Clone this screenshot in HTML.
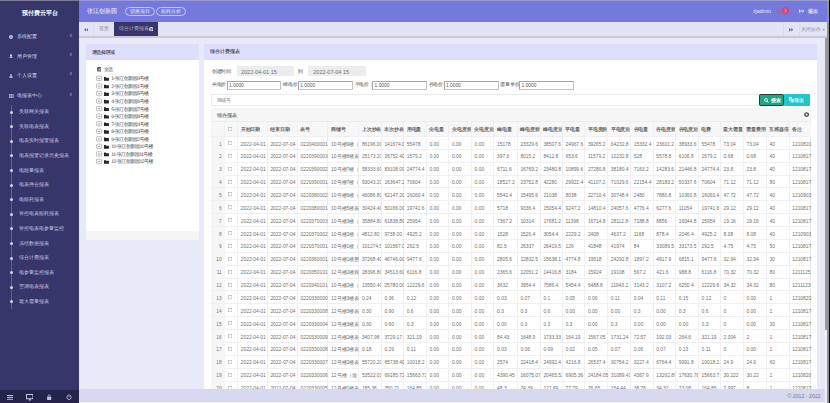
<!DOCTYPE html>
<html><head><meta charset="utf-8">
<style>
*{box-sizing:border-box;margin:0;padding:0}
html,body{width:830px;height:403px;overflow:hidden;background:#e9eaf8;font-family:"Liberation Sans",sans-serif;}
.abs{position:absolute}
div{position:absolute}
#sidebar{left:0;top:0;width:79px;height:403px;background:#36366b}
#sbb{left:0;top:389.6px;width:79px;height:13.4px;background:#23234b}
#topline{left:0;top:0;width:828.9px;height:1px;background:rgba(190,190,200,0.5)}
#hdr{left:79px;top:0;width:748.3px;height:21.9px;background:#7479db}
#tabs{left:79px;top:21.9px;width:748px;height:14.3px;background:#e3e4f3}
#tabsb{left:79px;top:36.2px;width:748px;height:1.4px;background:#c6c7dc}
#footer{left:79px;top:389.4px;width:745.5px;height:12.2px;background:#d8d8f1}
#footl{left:79px;top:401.6px;width:745.5px;height:1.4px;background:#f2f2fa}
#rs1{left:827.3px;top:0;width:1.6px;height:403px;background:#929292}
#rs2{left:828.9px;top:0;width:1.1px;height:403px;background:#0a0a0a}
#rs3{left:824.5px;top:37.7px;width:2.8px;height:292.6px;background:#9a9a9a}
#rs4{left:824.5px;top:330.3px;width:2.8px;height:72.7px;background:#f0f0f3}
.title{left:0;width:79px;top:9px;text-align:center;color:#fff;font-weight:bold;font-size:6px;line-height:8px}
.mi{left:17.2px;color:#d4d4ea;font-size:5.1px;line-height:8px;white-space:nowrap}
.mico{left:9px;width:3.5px;height:3.5px;background:#c9c9e3;border-radius:1px}
.chev{left:69.6px;color:#b4b4d4;font-size:8px;line-height:8px}
.smi{left:18.6px;color:#c8c8e2;font-size:5.25px;line-height:8px;white-space:nowrap}
.dot{left:9.85px;width:3px;height:3px;border-radius:50%;background:#d4d4ea}
#vline{left:10.7px;top:105px;width:1.2px;height:203.5px;background:#62629a}
.ico{color:#c2c2e0;font-size:6px;line-height:8px}

.hbrand{left:87px;top:7.2px;color:#fff;font-size:5.6px;line-height:8px;white-space:nowrap}
.pill{top:7px;height:9.4px;border:0.6px solid #c4c8f4;border-radius:5px;color:#e6e8ff;font-size:4.8px;line-height:8px;text-align:center;white-space:nowrap}
.hr{color:#e9ebff;font-size:5.2px;line-height:8px;white-space:nowrap}
.badge{left:782.1px;top:7.1px;width:6.8px;height:6.8px;border-radius:50%;background:#d3497a;color:#f4d8e2;font-size:4px;line-height:7.2px;text-align:center}
.bell{left:776.3px;top:7.6px;width:5px;height:6px}

.tab{color:#8e8ea8;font-size:4.8px;line-height:8px;white-space:nowrap}
#acttab{left:114.1px;top:21.9px;width:44.2px;height:14.1px;background:#36366b}
.sep{top:21.6px;width:0.6px;height:14.6px;background:#dadbec}

.panel{background:#fff;border-radius:1.2px}
.ph{background:#dee0fb}
.ptitle{color:#4a4a58;font-size:5.2px;line-height:8px;white-space:nowrap;-webkit-text-stroke:0.12px #4a4a58}

.tb{left:96.1px;width:4.6px;height:4.6px;border:0.6px solid #8a8a8a;background:#fff;border-radius:0.6px}
.tbm{left:97.3px;width:2.2px;height:0.6px;background:#666}
.fold{left:104px;width:5px;height:4px;background:#2b2b2b;border-radius:0.5px}
.tn{left:111.3px;color:#4a4a4a;font-size:5px;letter-spacing:-0.5px;line-height:8px;white-space:nowrap}

.lbl{color:#555;font-size:4.8px;letter-spacing:-0.2px;line-height:8px;white-space:nowrap}
.inp{height:9.1px;border:0.6px solid #c2c2c2;border-top-color:#a6a6a6;border-left-color:#a6a6a6;background:#fff;color:#555;font-size:4.85px;line-height:8.2px;padding-left:1.3px;white-space:nowrap}
.date{top:66.2px;height:10.3px;background:#ececec;color:#707070;font-size:5.5px;line-height:12.3px;white-space:nowrap}

.btn{top:94.1px;height:12px;border-radius:1px;color:#fff;font-size:5px;line-height:12px;white-space:nowrap;font-weight:bold}

.vl{top:121.7px;width:0.6px;height:281.3px;background:#f0f0f2}
.hl{left:211.4px;width:600.1px;height:0.6px;background:#f0f0f2}
.th{top:121.7px;height:14.8px;line-height:16.8px;padding-left:3.1px;font-size:4.5px;letter-spacing:-0.1px;font-weight:bold;color:#666;white-space:nowrap;overflow:hidden}
.td{height:12.87px;line-height:15.2px;padding-left:3.2px;font-size:4.9px;color:#707070;white-space:nowrap;overflow:hidden}
.idx{left:211.4px;width:13.4px;height:12.87px;line-height:15.2px;text-align:right;padding-right:3px;font-size:4.9px;color:#777;background:#f6f6f6}
.cbs{position:absolute;left:228px}
.cb{width:3.8px;height:3.8px;border:0.5px solid #9a9a9a;background:#fff}
</style></head><body>
<div id="sidebar"></div>
<div class="title">预付费云平台</div>
<div id="vline"></div>
<div class="mi" style="top:32.20px">系统配置</div>
<svg style="position:absolute;left:9px;top:35.00px" width="4.6" height="4" viewBox="0 0 4.6 4"><g fill="#d4d4ea"><circle cx="2" cy="2" r="1.45"/><rect x="1.55" y="0" width="0.9" height="4"/><rect x="0" y="1.55" width="4" height="0.9"/><rect x="1.55" y="0" width="0.9" height="4" transform="rotate(45 2 2)"/><rect x="1.55" y="0" width="0.9" height="4" transform="rotate(-45 2 2)"/></g><circle cx="2" cy="2" r="0.6" fill="#36366b"/></svg>
<div class="chev" style="top:31.70px">‹</div>
<div class="mi" style="top:51.50px">用户管理</div>
<svg style="position:absolute;left:9px;top:54.30px" width="4.6" height="4" viewBox="0 0 4.6 4"><g fill="#d4d4ea"><circle cx="2" cy="1.3" r="1.1"/><path d="M0.2 3.8 Q0.4 2.2 2 2.2 Q3.6 2.2 3.8 3.8 Z"/></g></svg>
<div class="chev" style="top:51.00px">‹</div>
<div class="mi" style="top:70.90px">个人设置</div>
<svg style="position:absolute;left:9px;top:73.70px" width="4.6" height="4" viewBox="0 0 4.6 4"><g fill="#d4d4ea"><circle cx="2" cy="1.1" r="0.95"/><path d="M0.3 3.8 L0.7 2.2 L3.3 2.2 L3.7 3.8 Z"/></g></svg>
<div class="chev" style="top:70.40px">‹</div>
<div class="mi" style="top:91.10px">电报表中心</div>
<svg style="position:absolute;left:9px;top:93.90px" width="4.6" height="4" viewBox="0 0 4.6 4"><g fill="#d4d4ea"><rect x="0" y="0.2" width="4.6" height="3.6"/></g><g fill="#36366b"><rect x="1.4" y="0.2" width="0.45" height="3.6"/><rect x="2.9" y="0.2" width="0.45" height="3.6"/><rect x="0" y="1.35" width="4.6" height="0.4"/><rect x="0" y="2.5" width="4.6" height="0.4"/></g></svg>
<div class="chev" style="top:90.60px">‹</div>
<div class="smi" style="top:107.20px">失联网关报表</div>
<div class="dot" style="top:110.50px"></div>
<div class="smi" style="top:121.80px">失联电表报表</div>
<div class="dot" style="top:125.10px"></div>
<div class="smi" style="top:136.40px">电表实时报警报表</div>
<div class="dot" style="top:139.70px"></div>
<div class="smi" style="top:151.00px">电表报警记录历史报表</div>
<div class="dot" style="top:154.30px"></div>
<div class="smi" style="top:165.60px">电能量报表</div>
<div class="dot" style="top:168.90px"></div>
<div class="smi" style="top:180.20px">电表停合报表</div>
<div class="dot" style="top:183.50px"></div>
<div class="smi" style="top:194.80px">电能耗报表</div>
<div class="dot" style="top:198.10px"></div>
<div class="smi" style="top:209.40px">管控电表能耗报表</div>
<div class="dot" style="top:212.70px"></div>
<div class="smi" style="top:224.00px">管控电表电参量监控</div>
<div class="dot" style="top:227.30px"></div>
<div class="smi" style="top:238.60px">冻结数据报表</div>
<div class="dot" style="top:241.90px"></div>
<div class="smi" style="top:253.20px">综合计费报表</div>
<div class="dot" style="top:256.50px"></div>
<div class="smi" style="top:267.80px">电参量监控报表</div>
<div class="dot" style="top:271.10px"></div>
<div class="smi" style="top:282.40px">空调电表报表</div>
<div class="dot" style="top:285.70px"></div>
<div class="smi" style="top:297.00px">最大需量报表</div>
<div class="dot" style="top:300.30px"></div>
<div id="sbb"></div>
<svg style="position:absolute;left:6.8px;top:394.8px" width="6" height="5.4" viewBox="0 0 6 5.4"><rect x="0" y="0" width="6" height="1.1" fill="#c2c2e0"/><rect x="0" y="2.1" width="6" height="1.1" fill="#c2c2e0"/><rect x="0" y="4.3" width="6" height="1.1" fill="#c2c2e0"/></svg>
<svg style="position:absolute;left:25.8px;top:394.2px" width="7.4" height="6.6" viewBox="0 0 7.4 6.6"><rect x="0.5" y="0.5" width="6.4" height="4.2" fill="none" stroke="#c2c2e0" stroke-width="1"/><rect x="2.7" y="5" width="2" height="1.6" fill="#c2c2e0"/></svg>
<svg style="position:absolute;left:47.2px;top:394.2px" width="4.4" height="6" viewBox="0 0 8.8 12"><path d="M2.2 6 V3.8 A2.2 2.2 0 0 1 6.6 3.8 V6" fill="none" stroke="#c2c2e0" stroke-width="1.5"/><rect x="0.2" y="5.4" width="8.4" height="6.4" rx="0.8" fill="#c2c2e0"/></svg>
<svg style="position:absolute;left:66.2px;top:394.2px" width="6" height="6" viewBox="0 0 12 12"><circle cx="6" cy="6.6" r="4.3" fill="none" stroke="#c2c2e0" stroke-width="1.7"/><rect x="4.2" y="0" width="3.6" height="5" fill="#23234b"/><rect x="5.1" y="0.4" width="1.8" height="5.6" fill="#c2c2e0"/></svg>
<div id="hdr"></div>
<div class="hbrand">张江创新园</div>
<div class="pill" style="left:125.3px;width:29.5px">切换项目</div>
<div class="pill" style="left:156px;width:29.6px">能耗分析</div>
<div class="hr" style="left:753px;top:6.8px">zjadmin</div>
<svg style="position:absolute;left:776px;top:7.6px" width="5.4" height="6" viewBox="0 0 5.4 6"><path d="M1.1 4.4 L1.1 2.6 Q1.1 0.7 2.7 0.7 Q4.3 0.7 4.3 2.6 L4.3 4.4 L4.9 4.9 L0.5 4.9 Z" fill="none" stroke="#d0507a" stroke-width="0.55"/><rect x="2.2" y="5.1" width="1" height="0.6" fill="#d0507a"/></svg>
<div class="badge">1</div>
<svg style="position:absolute;left:799px;top:9px" width="5" height="4" viewBox="0 0 5 4"><rect x="0" y="0.4" width="1.3" height="3.2" fill="#e4e6fb"/><path d="M1.6 2 L4.6 2 M3.4 0.6 L4.8 2 L3.4 3.4" stroke="#e4e6fb" stroke-width="0.9" fill="none"/></svg>
<div class="hr" style="left:807.8px;top:6.9px;font-weight:bold">退出</div>

<div id="tabs"></div>
<div id="tabsb"></div>
<svg style="position:absolute;left:84px;top:27.6px" width="4.4" height="3.6" viewBox="0 0 4.4 3.6"><path d="M0 1.8 L2.1 0 V3.6 Z M2.2 1.8 L4.3 0 V3.6 Z" fill="#6e6e80"/></svg>
<div class="sep" style="left:93.1px"></div>
<div class="tab" style="left:98.8px;top:25.2px;color:#858598;font-size:4.6px">首页</div>
<div id="acttab"></div>
<div class="tab" style="left:119.2px;top:25.2px;color:#b4b4d0;font-size:4.85px">综合计费报表</div>
<svg style="position:absolute;left:148.8px;top:26.9px" width="4.6" height="4.6" viewBox="0 0 10 10"><circle cx="5" cy="5" r="3.6" fill="none" stroke="#dcdcee" stroke-width="2.4"/><circle cx="5" cy="5" r="1.3" fill="#9a9ac0"/></svg>
<div class="sep" style="left:783.4px"></div>
<div class="sep" style="left:798.6px"></div>
<svg style="position:absolute;left:788.6px;top:28.1px" width="4.4" height="3.6" viewBox="0 0 4.4 3.6"><path d="M2.1 1.8 L0 0 V3.6 Z M4.3 1.8 L2.2 0 V3.6 Z" fill="#6e6e80"/></svg>
<div class="tab" style="left:801.3px;top:25.9px">关闭操作<span style="font-size:3.5px;position:relative;top:-0.3px;margin-left:0.6px">▼</span></div>


<!-- left panel -->
<div class="panel" style="left:86.3px;top:44.1px;width:112.6px;height:196px;background:#f5f5f5"></div>
<div class="panel" style="left:86.3px;top:60.1px;width:112.6px;height:171px"></div>
<div class="ph" style="left:86.3px;top:44.1px;width:112.6px;height:16px"></div>
<div class="ptitle" style="left:91.6px;top:47.6px;letter-spacing:-0.35px">请选择区域</div>
<svg style="position:absolute;left:96.6px;top:67.4px" width="4.6" height="4.6" viewBox="0 0 4.6 4.6"><rect x="0" y="0" width="4.6" height="4.6" rx="0.5" fill="#666"/><path d="M1.1 2.4 L2 3.3 L3.6 1.3" stroke="#fff" stroke-width="0.7" fill="none"/></svg>
<div class="tn" style="left:103.9px;top:65.7px;font-size:4.85px">全选</div>
<svg style="position:absolute;left:96px;top:60px" width="80" height="110" viewBox="0 0 80 110" font-size="5" letter-spacing="-0.5" fill="#4a4a4a" text-rendering="geometricPrecision"><path d="M3.05 20.60 V99.65" stroke="#d0d0d0" stroke-width="0.4" stroke-dasharray="0.6 0.6"/><rect x="0.55" y="16.25" width="5" height="4.3" rx="0.5" fill="#fff" stroke="#9a9a9a" stroke-width="0.6"/><path d="M1.8 18.60 H4.3" stroke="#777" stroke-width="0.7"/><path d="M5.6 18.60 H7.4" stroke="#c4c4c4" stroke-width="0.4"/><path d="M8 17.10 H9.6 L10.1 17.70 H12.9 V20.80 H8 Z" fill="#262626"/><text x="15.3" y="20.35">1-张江创新园9号楼</text><rect x="0.55" y="23.80" width="5" height="4.3" rx="0.5" fill="#fff" stroke="#9a9a9a" stroke-width="0.6"/><path d="M1.8 26.15 H4.3" stroke="#777" stroke-width="0.7"/><path d="M5.6 26.15 H7.4" stroke="#c4c4c4" stroke-width="0.4"/><path d="M8 24.65 H9.6 L10.1 25.25 H12.9 V28.35 H8 Z" fill="#262626"/><text x="15.3" y="27.90">2-张江创新园1号楼</text><rect x="0.55" y="31.35" width="5" height="4.3" rx="0.5" fill="#fff" stroke="#9a9a9a" stroke-width="0.6"/><path d="M1.8 33.70 H4.3" stroke="#777" stroke-width="0.7"/><path d="M5.6 33.70 H7.4" stroke="#c4c4c4" stroke-width="0.4"/><path d="M8 32.20 H9.6 L10.1 32.80 H12.9 V35.90 H8 Z" fill="#262626"/><text x="15.3" y="35.45">3-张江创新园5号楼</text><rect x="0.55" y="38.90" width="5" height="4.3" rx="0.5" fill="#fff" stroke="#9a9a9a" stroke-width="0.6"/><path d="M1.8 41.25 H4.3" stroke="#777" stroke-width="0.7"/><path d="M5.6 41.25 H7.4" stroke="#c4c4c4" stroke-width="0.4"/><path d="M8 39.75 H9.6 L10.1 40.35 H12.9 V43.45 H8 Z" fill="#262626"/><text x="15.3" y="43.00">4-张江创新园6号楼</text><rect x="0.55" y="46.45" width="5" height="4.3" rx="0.5" fill="#fff" stroke="#9a9a9a" stroke-width="0.6"/><path d="M1.8 48.80 H4.3" stroke="#777" stroke-width="0.7"/><path d="M5.6 48.80 H7.4" stroke="#c4c4c4" stroke-width="0.4"/><path d="M8 47.30 H9.6 L10.1 47.90 H12.9 V51.00 H8 Z" fill="#262626"/><text x="15.3" y="50.55">5-张江创新园7号楼</text><rect x="0.55" y="54.00" width="5" height="4.3" rx="0.5" fill="#fff" stroke="#9a9a9a" stroke-width="0.6"/><path d="M1.8 56.35 H4.3" stroke="#777" stroke-width="0.7"/><path d="M5.6 56.35 H7.4" stroke="#c4c4c4" stroke-width="0.4"/><path d="M8 54.85 H9.6 L10.1 55.45 H12.9 V58.55 H8 Z" fill="#262626"/><text x="15.3" y="58.10">6-张江创新园8号楼</text><rect x="0.55" y="61.55" width="5" height="4.3" rx="0.5" fill="#fff" stroke="#9a9a9a" stroke-width="0.6"/><path d="M1.8 63.90 H4.3" stroke="#777" stroke-width="0.7"/><path d="M5.6 63.90 H7.4" stroke="#c4c4c4" stroke-width="0.4"/><path d="M8 62.40 H9.6 L10.1 63.00 H12.9 V66.10 H8 Z" fill="#262626"/><text x="15.3" y="65.65">7-张江创新园4号楼</text><rect x="0.55" y="69.10" width="5" height="4.3" rx="0.5" fill="#fff" stroke="#9a9a9a" stroke-width="0.6"/><path d="M1.8 71.45 H4.3" stroke="#777" stroke-width="0.7"/><path d="M5.6 71.45 H7.4" stroke="#c4c4c4" stroke-width="0.4"/><path d="M8 69.95 H9.6 L10.1 70.55 H12.9 V73.65 H8 Z" fill="#262626"/><text x="15.3" y="73.20">8-张江创新园3号楼</text><rect x="0.55" y="76.65" width="5" height="4.3" rx="0.5" fill="#fff" stroke="#9a9a9a" stroke-width="0.6"/><path d="M1.8 79.00 H4.3" stroke="#777" stroke-width="0.7"/><path d="M5.6 79.00 H7.4" stroke="#c4c4c4" stroke-width="0.4"/><path d="M8 77.50 H9.6 L10.1 78.10 H12.9 V81.20 H8 Z" fill="#262626"/><text x="15.3" y="80.75">9-张江创新园2号楼</text><rect x="0.55" y="84.20" width="5" height="4.3" rx="0.5" fill="#fff" stroke="#9a9a9a" stroke-width="0.6"/><path d="M1.8 86.55 H4.3" stroke="#777" stroke-width="0.7"/><path d="M5.6 86.55 H7.4" stroke="#c4c4c4" stroke-width="0.4"/><path d="M8 85.05 H9.6 L10.1 85.65 H12.9 V88.75 H8 Z" fill="#262626"/><text x="15.3" y="88.30">10-张江创新园10号楼</text><rect x="0.55" y="91.75" width="5" height="4.3" rx="0.5" fill="#fff" stroke="#9a9a9a" stroke-width="0.6"/><path d="M1.8 94.10 H4.3" stroke="#777" stroke-width="0.7"/><path d="M5.6 94.10 H7.4" stroke="#c4c4c4" stroke-width="0.4"/><path d="M8 92.60 H9.6 L10.1 93.20 H12.9 V96.30 H8 Z" fill="#262626"/><text x="15.3" y="95.85">11-张江创新园11号楼</text><rect x="0.55" y="99.30" width="5" height="4.3" rx="0.5" fill="#fff" stroke="#9a9a9a" stroke-width="0.6"/><path d="M1.8 101.65 H4.3" stroke="#777" stroke-width="0.7"/><path d="M5.6 101.65 H7.4" stroke="#c4c4c4" stroke-width="0.4"/><path d="M8 100.15 H9.6 L10.1 100.75 H12.9 V103.85 H8 Z" fill="#262626"/><text x="15.3" y="103.40">12-张江创新园12号楼</text></svg>

<!-- right panel -->
<div class="panel" style="left:204.3px;top:44.1px;width:612.6px;height:360px"></div>
<div class="ph" style="left:204.3px;top:44.1px;width:612.6px;height:16.2px"></div>
<div class="ptitle" style="left:209.8px;top:47.4px">综合计费报表</div>

<div class="lbl" style="left:211.8px;top:67.8px">创建时间:</div>
<div class="date" style="left:236.6px;width:57.1px;padding-left:4.4px">2022-04-01 15</div>
<div class="date" style="left:293.7px;width:14.2px;background:#fff;text-align:center;color:#555;font-size:5.4px;line-height:11.2px">到</div>
<div class="date" style="left:307.9px;width:57.8px;padding-left:5.4px">2022-07-04 15</div>

<div class="lbl" style="left:211.8px;top:81px">尖电价:</div>
<div class="inp" style="left:226.7px;top:80.7px;width:54.8px">1.0000</div>
<div class="lbl" style="left:283.2px;top:81px">峰电价:</div>
<div class="inp" style="left:298px;top:80.7px;width:54.5px">1.0000</div>
<div class="lbl" style="left:354.6px;top:81px">平电价：</div>
<div class="inp" style="left:372.3px;top:80.7px;width:55px">1.0000</div>
<div class="lbl" style="left:428.6px;top:81px">谷电价:</div>
<div class="inp" style="left:443.7px;top:80.7px;width:54.9px">1.0000</div>
<div class="lbl" style="left:500.2px;top:81px">需量单价:</div>
<div class="inp" style="left:519.3px;top:80.7px;width:54.3px">1.0000</div>

<div style="left:211.2px;top:94.1px;width:548px;height:12.2px;border:0.6px solid #ebebeb;border-right:none;background:#fff"></div>
<div class="lbl" style="left:216.6px;top:96.2px;color:#8a8a8a;font-size:5.2px">商铺号</div>
<div class="btn" style="left:759.2px;width:25px;background:#1ea584;border:0.9px solid #2a3a36;border-radius:1.2px;padding-left:10.6px;line-height:10.4px">搜索</div><svg style="position:absolute;left:763.5px;top:97.6px" width="5" height="5" viewBox="0 0 5 5"><circle cx="2" cy="2" r="1.45" fill="none" stroke="#e8f6f2" stroke-width="0.9"/><path d="M3 3 L4.5 4.5" stroke="#e8f6f2" stroke-width="1"/></svg>
<div class="btn" style="left:784.2px;width:26px;background:#23c6c8;padding-left:9.8px;color:#e6f9f9">导出</div><svg style="position:absolute;left:788.7px;top:97.2px" width="5.2" height="5.6" viewBox="0 0 5.2 5.6"><rect x="0" y="0" width="3" height="3.8" fill="#eefafa"/><rect x="1.8" y="1.6" width="3.2" height="4" fill="#eefafa" stroke="#23c6c8" stroke-width="0.5"/></svg>

<!-- table panel -->
<div style="left:211.2px;top:108px;width:600.3px;height:300px;border:0.6px solid #e7e8ea;background:#fff"></div>
<div style="left:211.4px;top:108.4px;width:600px;height:13.3px;background:#f7f7f7;border-bottom:0.6px solid #ececee"></div>
<div class="ptitle" style="left:216.9px;top:112.4px;color:#5a5a5a;font-size:4.7px;-webkit-text-stroke:0.1px #777">综合报表</div>
<svg style="position:absolute;left:803.8px;top:112.4px" width="5.2" height="5.2" viewBox="0 0 10 10"><circle cx="5" cy="5" r="3.4" fill="none" stroke="#505050" stroke-width="2.6"/><circle cx="5" cy="5" r="1.2" fill="#d8d8d8"/></svg>
<div style="left:211.4px;top:121.7px;width:600px;height:14.8px;background:#f7f7f7"></div>
<div class="vl" style="left:224.30px"></div>
<div class="vl" style="left:237.10px"></div>
<div class="vl" style="left:266.70px"></div>
<div class="vl" style="left:296.80px"></div>
<div class="vl" style="left:327.40px"></div>
<div class="vl" style="left:358.20px"></div>
<div class="vl" style="left:380.70px"></div>
<div class="vl" style="left:403.10px"></div>
<div class="vl" style="left:425.70px"></div>
<div class="vl" style="left:448.30px"></div>
<div class="vl" style="left:470.90px"></div>
<div class="vl" style="left:493.40px"></div>
<div class="vl" style="left:516.70px"></div>
<div class="vl" style="left:539.70px"></div>
<div class="vl" style="left:561.80px"></div>
<div class="vl" style="left:584.20px"></div>
<div class="vl" style="left:607.10px"></div>
<div class="vl" style="left:630.00px"></div>
<div class="vl" style="left:652.60px"></div>
<div class="vl" style="left:675.00px"></div>
<div class="vl" style="left:697.90px"></div>
<div class="vl" style="left:719.90px"></div>
<div class="vl" style="left:742.80px"></div>
<div class="vl" style="left:765.80px"></div>
<div class="vl" style="left:788.50px"></div>
<svg class="cbs" style="top:127.20px" width="4.2" height="4.2" viewBox="0 0 4.2 4.2"><rect x="0.3" y="0.3" width="3.6" height="3.6" fill="#fff" stroke="#a8a8a8" stroke-width="0.55"/></svg>
<div class="th" style="left:237.60px;width:29.60px">开始日期</div>
<div class="th" style="left:267.20px;width:30.10px">结束日期</div>
<div class="th" style="left:297.30px;width:30.60px">表号</div>
<div class="th" style="left:327.90px;width:30.80px">商铺号</div>
<div class="th" style="left:358.70px;width:22.50px">上次抄表</div>
<div class="th" style="left:381.20px;width:22.40px">本次抄表</div>
<div class="th" style="left:403.60px;width:22.60px">用电量</div>
<div class="th" style="left:426.20px;width:22.60px">尖电量</div>
<div class="th" style="left:448.80px;width:22.60px">尖电度前</div>
<div class="th" style="left:471.40px;width:22.50px">尖电度后</div>
<div class="th" style="left:493.90px;width:23.30px">峰电量</div>
<div class="th" style="left:517.20px;width:23.00px">峰电度前</div>
<div class="th" style="left:540.20px;width:22.10px">峰电度后</div>
<div class="th" style="left:562.30px;width:22.40px">平电量</div>
<div class="th" style="left:584.70px;width:22.90px">平电度前</div>
<div class="th" style="left:607.60px;width:22.90px">平电度后</div>
<div class="th" style="left:630.50px;width:22.60px">谷电量</div>
<div class="th" style="left:653.10px;width:22.40px">谷电度前</div>
<div class="th" style="left:675.50px;width:22.90px">谷电度后</div>
<div class="th" style="left:698.40px;width:22.00px">电费</div>
<div class="th" style="left:720.40px;width:22.90px">最大需量</div>
<div class="th" style="left:743.30px;width:23.00px">需量费用</div>
<div class="th" style="left:766.30px;width:22.70px">互感器倍</div>
<div class="th" style="left:789.00px;width:22.50px">备注</div>
<div class="hl" style="top:136.00px"></div>
<div class="idx" style="top:136.50px">1</div>
<svg class="cbs" style="top:141.00px" width="4.2" height="4.2" viewBox="0 0 4.2 4.2"><rect x="0.3" y="0.3" width="3.6" height="3.6" fill="#fff" stroke="#a8a8a8" stroke-width="0.55"/></svg>
<div class="td" style="left:237.60px;top:136.50px;width:29.60px">2022-04-01</div>
<div class="td" style="left:267.20px;top:136.50px;width:30.10px">2022-07-04</div>
<div class="td" style="left:297.30px;top:136.50px;width:30.60px">0220400001</div>
<div class="td" style="left:327.90px;top:136.50px;width:30.80px">10号楼9楼（</div>
<div class="td" style="left:358.70px;top:136.50px;width:22.50px">86196.00</div>
<div class="td" style="left:381.20px;top:136.50px;width:22.40px">141674.00</div>
<div class="td" style="left:403.60px;top:136.50px;width:22.60px">55478</div>
<div class="td" style="left:426.20px;top:136.50px;width:22.60px">0.00</div>
<div class="td" style="left:448.80px;top:136.50px;width:22.60px">0.00</div>
<div class="td" style="left:471.40px;top:136.50px;width:22.50px">0.00</div>
<div class="td" style="left:493.90px;top:136.50px;width:23.30px">15178</div>
<div class="td" style="left:517.20px;top:136.50px;width:23.00px">23329.6</div>
<div class="td" style="left:540.20px;top:136.50px;width:22.10px">38507.6</div>
<div class="td" style="left:562.30px;top:136.50px;width:22.40px">24967.6</div>
<div class="td" style="left:584.70px;top:136.50px;width:22.90px">39265.2</div>
<div class="td" style="left:607.60px;top:136.50px;width:22.90px">64232.8</div>
<div class="td" style="left:630.50px;top:136.50px;width:22.60px">15332.4</div>
<div class="td" style="left:653.10px;top:136.50px;width:22.40px">23601.2</div>
<div class="td" style="left:675.50px;top:136.50px;width:22.90px">38933.6</div>
<div class="td" style="left:698.40px;top:136.50px;width:22.00px">55478</div>
<div class="td" style="left:720.40px;top:136.50px;width:22.90px">73.04</div>
<div class="td" style="left:743.30px;top:136.50px;width:23.00px">73.04</div>
<div class="td" style="left:766.30px;top:136.50px;width:22.70px">40</div>
<div class="td" style="left:789.00px;top:136.50px;width:22.50px">1210820</div>
<div class="hl" style="top:148.87px"></div>
<div class="idx" style="top:149.37px">2</div>
<svg class="cbs" style="top:153.87px" width="4.2" height="4.2" viewBox="0 0 4.2 4.2"><rect x="0.3" y="0.3" width="3.6" height="3.6" fill="#fff" stroke="#a8a8a8" stroke-width="0.55"/></svg>
<div class="td" style="left:237.60px;top:149.37px;width:29.60px">2022-04-01</div>
<div class="td" style="left:267.20px;top:149.37px;width:30.10px">2022-07-04</div>
<div class="td" style="left:297.30px;top:149.37px;width:30.60px">0220390003</div>
<div class="td" style="left:327.90px;top:149.37px;width:30.80px">10号楼8楼表</div>
<div class="td" style="left:358.70px;top:149.37px;width:22.50px">25173.20</div>
<div class="td" style="left:381.20px;top:149.37px;width:22.40px">26752.40</div>
<div class="td" style="left:403.60px;top:149.37px;width:22.60px">1579.2</div>
<div class="td" style="left:426.20px;top:149.37px;width:22.60px">0.00</div>
<div class="td" style="left:448.80px;top:149.37px;width:22.60px">0.00</div>
<div class="td" style="left:471.40px;top:149.37px;width:22.50px">0.00</div>
<div class="td" style="left:493.90px;top:149.37px;width:23.30px">397.6</div>
<div class="td" style="left:517.20px;top:149.37px;width:23.00px">8015.2</div>
<div class="td" style="left:540.20px;top:149.37px;width:22.10px">8412.8</div>
<div class="td" style="left:562.30px;top:149.37px;width:22.40px">653.6</div>
<div class="td" style="left:584.70px;top:149.37px;width:22.90px">11579.2</div>
<div class="td" style="left:607.60px;top:149.37px;width:22.90px">12232.8</div>
<div class="td" style="left:630.50px;top:149.37px;width:22.60px">528</div>
<div class="td" style="left:653.10px;top:149.37px;width:22.40px">5578.8</div>
<div class="td" style="left:675.50px;top:149.37px;width:22.90px">6106.8</div>
<div class="td" style="left:698.40px;top:149.37px;width:22.00px">1579.2</div>
<div class="td" style="left:720.40px;top:149.37px;width:22.90px">0.68</div>
<div class="td" style="left:743.30px;top:149.37px;width:23.00px">0.68</div>
<div class="td" style="left:766.30px;top:149.37px;width:22.70px">40</div>
<div class="td" style="left:789.00px;top:149.37px;width:22.50px">1210817-</div>
<div class="hl" style="top:161.74px"></div>
<div class="idx" style="top:162.24px">3</div>
<svg class="cbs" style="top:166.74px" width="4.2" height="4.2" viewBox="0 0 4.2 4.2"><rect x="0.3" y="0.3" width="3.6" height="3.6" fill="#fff" stroke="#a8a8a8" stroke-width="0.55"/></svg>
<div class="td" style="left:237.60px;top:162.24px;width:29.60px">2022-04-01</div>
<div class="td" style="left:267.20px;top:162.24px;width:30.10px">2022-07-04</div>
<div class="td" style="left:297.30px;top:162.24px;width:30.60px">0220390002</div>
<div class="td" style="left:327.90px;top:162.24px;width:30.80px">10号楼7楼（</div>
<div class="td" style="left:358.70px;top:162.24px;width:22.50px">58333.60</div>
<div class="td" style="left:381.20px;top:162.24px;width:22.40px">83108.00</div>
<div class="td" style="left:403.60px;top:162.24px;width:22.60px">24774.4</div>
<div class="td" style="left:426.20px;top:162.24px;width:22.60px">0.00</div>
<div class="td" style="left:448.80px;top:162.24px;width:22.60px">0.00</div>
<div class="td" style="left:471.40px;top:162.24px;width:22.50px">0.00</div>
<div class="td" style="left:493.90px;top:162.24px;width:23.30px">6711.6</div>
<div class="td" style="left:517.20px;top:162.24px;width:23.00px">16769.2</div>
<div class="td" style="left:540.20px;top:162.24px;width:22.10px">23480.8</div>
<div class="td" style="left:562.30px;top:162.24px;width:22.40px">10899.6</div>
<div class="td" style="left:584.70px;top:162.24px;width:22.90px">27280.8</div>
<div class="td" style="left:607.60px;top:162.24px;width:22.90px">38180.4</div>
<div class="td" style="left:630.50px;top:162.24px;width:22.60px">7163.2</div>
<div class="td" style="left:653.10px;top:162.24px;width:22.40px">14283.6</div>
<div class="td" style="left:675.50px;top:162.24px;width:22.90px">21446.8</div>
<div class="td" style="left:698.40px;top:162.24px;width:22.00px">24774.4</div>
<div class="td" style="left:720.40px;top:162.24px;width:22.90px">23.8</div>
<div class="td" style="left:743.30px;top:162.24px;width:23.00px">23.8</div>
<div class="td" style="left:766.30px;top:162.24px;width:22.70px">40</div>
<div class="td" style="left:789.00px;top:162.24px;width:22.50px">1210817-</div>
<div class="hl" style="top:174.61px"></div>
<div class="idx" style="top:175.11px">4</div>
<svg class="cbs" style="top:179.61px" width="4.2" height="4.2" viewBox="0 0 4.2 4.2"><rect x="0.3" y="0.3" width="3.6" height="3.6" fill="#fff" stroke="#a8a8a8" stroke-width="0.55"/></svg>
<div class="td" style="left:237.60px;top:175.11px;width:29.60px">2022-04-01</div>
<div class="td" style="left:267.20px;top:175.11px;width:30.10px">2022-07-04</div>
<div class="td" style="left:297.30px;top:175.11px;width:30.60px">0220390001</div>
<div class="td" style="left:327.90px;top:175.11px;width:30.80px">10号楼7楼（</div>
<div class="td" style="left:358.70px;top:175.11px;width:22.50px">93043.20</div>
<div class="td" style="left:381.20px;top:175.11px;width:22.40px">163647.2</div>
<div class="td" style="left:403.60px;top:175.11px;width:22.60px">70604</div>
<div class="td" style="left:426.20px;top:175.11px;width:22.60px">0.00</div>
<div class="td" style="left:448.80px;top:175.11px;width:22.60px">0.00</div>
<div class="td" style="left:471.40px;top:175.11px;width:22.50px">0.00</div>
<div class="td" style="left:493.90px;top:175.11px;width:23.30px">18527.2</div>
<div class="td" style="left:517.20px;top:175.11px;width:23.00px">23752.8</div>
<div class="td" style="left:540.20px;top:175.11px;width:22.10px">42280</div>
<div class="td" style="left:562.30px;top:175.11px;width:22.40px">29922.4</div>
<div class="td" style="left:584.70px;top:175.11px;width:22.90px">41107.2</div>
<div class="td" style="left:607.60px;top:175.11px;width:22.90px">71029.6</div>
<div class="td" style="left:630.50px;top:175.11px;width:22.60px">22154.4</div>
<div class="td" style="left:653.10px;top:175.11px;width:22.40px">28183.2</div>
<div class="td" style="left:675.50px;top:175.11px;width:22.90px">50337.6</div>
<div class="td" style="left:698.40px;top:175.11px;width:22.00px">70604</div>
<div class="td" style="left:720.40px;top:175.11px;width:22.90px">71.12</div>
<div class="td" style="left:743.30px;top:175.11px;width:23.00px">71.12</div>
<div class="td" style="left:766.30px;top:175.11px;width:22.70px">80</div>
<div class="td" style="left:789.00px;top:175.11px;width:22.50px">1210817-</div>
<div class="hl" style="top:187.48px"></div>
<div class="idx" style="top:187.98px">5</div>
<svg class="cbs" style="top:192.48px" width="4.2" height="4.2" viewBox="0 0 4.2 4.2"><rect x="0.3" y="0.3" width="3.6" height="3.6" fill="#fff" stroke="#a8a8a8" stroke-width="0.55"/></svg>
<div class="td" style="left:237.60px;top:187.98px;width:29.60px">2022-04-01</div>
<div class="td" style="left:267.20px;top:187.98px;width:30.10px">2022-07-04</div>
<div class="td" style="left:297.30px;top:187.98px;width:30.60px">0220380002</div>
<div class="td" style="left:327.90px;top:187.98px;width:30.80px">10号楼6楼（</div>
<div class="td" style="left:358.70px;top:187.98px;width:22.50px">46086.80</div>
<div class="td" style="left:381.20px;top:187.98px;width:22.40px">62147.20</div>
<div class="td" style="left:403.60px;top:187.98px;width:22.60px">16060.4</div>
<div class="td" style="left:426.20px;top:187.98px;width:22.60px">0.00</div>
<div class="td" style="left:448.80px;top:187.98px;width:22.60px">0.00</div>
<div class="td" style="left:471.40px;top:187.98px;width:22.50px">0.00</div>
<div class="td" style="left:493.90px;top:187.98px;width:23.30px">5542.4</div>
<div class="td" style="left:517.20px;top:187.98px;width:23.00px">15495.6</div>
<div class="td" style="left:540.20px;top:187.98px;width:22.10px">21038</div>
<div class="td" style="left:562.30px;top:187.98px;width:22.40px">8038</div>
<div class="td" style="left:584.70px;top:187.98px;width:22.90px">22710.4</div>
<div class="td" style="left:607.60px;top:187.98px;width:22.90px">30748.4</div>
<div class="td" style="left:630.50px;top:187.98px;width:22.60px">2480</div>
<div class="td" style="left:653.10px;top:187.98px;width:22.40px">7880.8</div>
<div class="td" style="left:675.50px;top:187.98px;width:22.90px">10360.8</div>
<div class="td" style="left:698.40px;top:187.98px;width:22.00px">16060.4</div>
<div class="td" style="left:720.40px;top:187.98px;width:22.90px">47.72</div>
<div class="td" style="left:743.30px;top:187.98px;width:23.00px">47.72</div>
<div class="td" style="left:766.30px;top:187.98px;width:22.70px">40</div>
<div class="td" style="left:789.00px;top:187.98px;width:22.50px">1210903</div>
<div class="hl" style="top:200.35px"></div>
<div class="idx" style="top:200.85px">6</div>
<svg class="cbs" style="top:205.35px" width="4.2" height="4.2" viewBox="0 0 4.2 4.2"><rect x="0.3" y="0.3" width="3.6" height="3.6" fill="#fff" stroke="#a8a8a8" stroke-width="0.55"/></svg>
<div class="td" style="left:237.60px;top:200.85px;width:29.60px">2022-04-01</div>
<div class="td" style="left:267.20px;top:200.85px;width:30.10px">2022-07-04</div>
<div class="td" style="left:297.30px;top:200.85px;width:30.60px">0220380001</div>
<div class="td" style="left:327.90px;top:200.85px;width:30.80px">10号楼5楼表</div>
<div class="td" style="left:358.70px;top:200.85px;width:22.50px">30424.40</div>
<div class="td" style="left:381.20px;top:200.85px;width:22.40px">50166.00</div>
<div class="td" style="left:403.60px;top:200.85px;width:22.60px">19741.6</div>
<div class="td" style="left:426.20px;top:200.85px;width:22.60px">0.00</div>
<div class="td" style="left:448.80px;top:200.85px;width:22.60px">0.00</div>
<div class="td" style="left:471.40px;top:200.85px;width:22.50px">0.00</div>
<div class="td" style="left:493.90px;top:200.85px;width:23.30px">5718</div>
<div class="td" style="left:517.20px;top:200.85px;width:23.00px">9336.4</div>
<div class="td" style="left:540.20px;top:200.85px;width:22.10px">15054.4</div>
<div class="td" style="left:562.30px;top:200.85px;width:22.40px">9247.2</div>
<div class="td" style="left:584.70px;top:200.85px;width:22.90px">14810.4</div>
<div class="td" style="left:607.60px;top:200.85px;width:22.90px">24057.6</div>
<div class="td" style="left:630.50px;top:200.85px;width:22.60px">4776.4</div>
<div class="td" style="left:653.10px;top:200.85px;width:22.40px">6277.6</div>
<div class="td" style="left:675.50px;top:200.85px;width:22.90px">11054</div>
<div class="td" style="left:698.40px;top:200.85px;width:22.00px">19741.6</div>
<div class="td" style="left:720.40px;top:200.85px;width:22.90px">29.12</div>
<div class="td" style="left:743.30px;top:200.85px;width:23.00px">29.12</div>
<div class="td" style="left:766.30px;top:200.85px;width:22.70px">40</div>
<div class="td" style="left:789.00px;top:200.85px;width:22.50px">1210817-</div>
<div class="hl" style="top:213.22px"></div>
<div class="idx" style="top:213.72px">7</div>
<svg class="cbs" style="top:218.22px" width="4.2" height="4.2" viewBox="0 0 4.2 4.2"><rect x="0.3" y="0.3" width="3.6" height="3.6" fill="#fff" stroke="#a8a8a8" stroke-width="0.55"/></svg>
<div class="td" style="left:237.60px;top:213.72px;width:29.60px">2022-04-01</div>
<div class="td" style="left:267.20px;top:213.72px;width:30.10px">2022-07-04</div>
<div class="td" style="left:297.30px;top:213.72px;width:30.60px">0220370003</div>
<div class="td" style="left:327.90px;top:213.72px;width:30.80px">10号楼3楼（</div>
<div class="td" style="left:358.70px;top:213.72px;width:22.50px">35884.80</div>
<div class="td" style="left:381.20px;top:213.72px;width:22.40px">61838.80</div>
<div class="td" style="left:403.60px;top:213.72px;width:22.60px">25954</div>
<div class="td" style="left:426.20px;top:213.72px;width:22.60px">0.00</div>
<div class="td" style="left:448.80px;top:213.72px;width:22.60px">0.00</div>
<div class="td" style="left:471.40px;top:213.72px;width:22.50px">0.00</div>
<div class="td" style="left:493.90px;top:213.72px;width:23.30px">7367.2</div>
<div class="td" style="left:517.20px;top:213.72px;width:23.00px">10314</div>
<div class="td" style="left:540.20px;top:213.72px;width:22.10px">17681.2</div>
<div class="td" style="left:562.30px;top:213.72px;width:22.40px">11398</div>
<div class="td" style="left:584.70px;top:213.72px;width:22.90px">16714.8</div>
<div class="td" style="left:607.60px;top:213.72px;width:22.90px">28112.8</div>
<div class="td" style="left:630.50px;top:213.72px;width:22.60px">7188.8</div>
<div class="td" style="left:653.10px;top:213.72px;width:22.40px">8856</div>
<div class="td" style="left:675.50px;top:213.72px;width:22.90px">16044.8</div>
<div class="td" style="left:698.40px;top:213.72px;width:22.00px">25954</div>
<div class="td" style="left:720.40px;top:213.72px;width:22.90px">19.16</div>
<div class="td" style="left:743.30px;top:213.72px;width:23.00px">19.16</div>
<div class="td" style="left:766.30px;top:213.72px;width:22.70px">40</div>
<div class="td" style="left:789.00px;top:213.72px;width:22.50px">1210817-</div>
<div class="hl" style="top:226.09px"></div>
<div class="idx" style="top:226.59px">8</div>
<svg class="cbs" style="top:231.09px" width="4.2" height="4.2" viewBox="0 0 4.2 4.2"><rect x="0.3" y="0.3" width="3.6" height="3.6" fill="#fff" stroke="#a8a8a8" stroke-width="0.55"/></svg>
<div class="td" style="left:237.60px;top:226.59px;width:29.60px">2022-04-01</div>
<div class="td" style="left:267.20px;top:226.59px;width:30.10px">2022-07-04</div>
<div class="td" style="left:297.30px;top:226.59px;width:30.60px">0220370002</div>
<div class="td" style="left:327.90px;top:226.59px;width:30.80px">10号楼2楼（</div>
<div class="td" style="left:358.70px;top:226.59px;width:22.50px">4812.80</div>
<div class="td" style="left:381.20px;top:226.59px;width:22.40px">9738.00</div>
<div class="td" style="left:403.60px;top:226.59px;width:22.60px">4925.2</div>
<div class="td" style="left:426.20px;top:226.59px;width:22.60px">0.00</div>
<div class="td" style="left:448.80px;top:226.59px;width:22.60px">0.00</div>
<div class="td" style="left:471.40px;top:226.59px;width:22.50px">0.00</div>
<div class="td" style="left:493.90px;top:226.59px;width:23.30px">1528</div>
<div class="td" style="left:517.20px;top:226.59px;width:23.00px">1526.4</div>
<div class="td" style="left:540.20px;top:226.59px;width:22.10px">3054.4</div>
<div class="td" style="left:562.30px;top:226.59px;width:22.40px">2229.2</div>
<div class="td" style="left:584.70px;top:226.59px;width:22.90px">2408</div>
<div class="td" style="left:607.60px;top:226.59px;width:22.90px">4637.2</div>
<div class="td" style="left:630.50px;top:226.59px;width:22.60px">1168</div>
<div class="td" style="left:653.10px;top:226.59px;width:22.40px">878.4</div>
<div class="td" style="left:675.50px;top:226.59px;width:22.90px">2046.4</div>
<div class="td" style="left:698.40px;top:226.59px;width:22.00px">4925.2</div>
<div class="td" style="left:720.40px;top:226.59px;width:22.90px">8.08</div>
<div class="td" style="left:743.30px;top:226.59px;width:23.00px">8.08</div>
<div class="td" style="left:766.30px;top:226.59px;width:22.70px">40</div>
<div class="td" style="left:789.00px;top:226.59px;width:22.50px">1210903</div>
<div class="hl" style="top:238.96px"></div>
<div class="idx" style="top:239.46px">9</div>
<svg class="cbs" style="top:243.96px" width="4.2" height="4.2" viewBox="0 0 4.2 4.2"><rect x="0.3" y="0.3" width="3.6" height="3.6" fill="#fff" stroke="#a8a8a8" stroke-width="0.55"/></svg>
<div class="td" style="left:237.60px;top:239.46px;width:29.60px">2022-04-01</div>
<div class="td" style="left:267.20px;top:239.46px;width:30.10px">2022-07-04</div>
<div class="td" style="left:297.30px;top:239.46px;width:30.60px">0220370001</div>
<div class="td" style="left:327.90px;top:239.46px;width:30.80px">10号楼1楼（</div>
<div class="td" style="left:358.70px;top:239.46px;width:22.50px">101274.5</div>
<div class="td" style="left:381.20px;top:239.46px;width:22.40px">101567.0</div>
<div class="td" style="left:403.60px;top:239.46px;width:22.60px">292.5</div>
<div class="td" style="left:426.20px;top:239.46px;width:22.60px">0.00</div>
<div class="td" style="left:448.80px;top:239.46px;width:22.60px">0.00</div>
<div class="td" style="left:471.40px;top:239.46px;width:22.50px">0.00</div>
<div class="td" style="left:493.90px;top:239.46px;width:23.30px">82.5</div>
<div class="td" style="left:517.20px;top:239.46px;width:23.00px">26337</div>
<div class="td" style="left:540.20px;top:239.46px;width:22.10px">26419.5</div>
<div class="td" style="left:562.30px;top:239.46px;width:22.40px">126</div>
<div class="td" style="left:584.70px;top:239.46px;width:22.90px">41848</div>
<div class="td" style="left:607.60px;top:239.46px;width:22.90px">41974</div>
<div class="td" style="left:630.50px;top:239.46px;width:22.60px">84</div>
<div class="td" style="left:653.10px;top:239.46px;width:22.40px">33089.5</div>
<div class="td" style="left:675.50px;top:239.46px;width:22.90px">33173.5</div>
<div class="td" style="left:698.40px;top:239.46px;width:22.00px">292.5</div>
<div class="td" style="left:720.40px;top:239.46px;width:22.90px">4.75</div>
<div class="td" style="left:743.30px;top:239.46px;width:23.00px">4.75</div>
<div class="td" style="left:766.30px;top:239.46px;width:22.70px">50</div>
<div class="td" style="left:789.00px;top:239.46px;width:22.50px">1210817-</div>
<div class="hl" style="top:251.83px"></div>
<div class="idx" style="top:252.33px">10</div>
<svg class="cbs" style="top:256.83px" width="4.2" height="4.2" viewBox="0 0 4.2 4.2"><rect x="0.3" y="0.3" width="3.6" height="3.6" fill="#fff" stroke="#a8a8a8" stroke-width="0.55"/></svg>
<div class="td" style="left:237.60px;top:252.33px;width:29.60px">2022-04-01</div>
<div class="td" style="left:267.20px;top:252.33px;width:30.10px">2022-07-04</div>
<div class="td" style="left:297.30px;top:252.33px;width:30.60px">0220360001</div>
<div class="td" style="left:327.90px;top:252.33px;width:30.80px">10号楼1楼层</div>
<div class="td" style="left:358.70px;top:252.33px;width:22.50px">37268.40</div>
<div class="td" style="left:381.20px;top:252.33px;width:22.40px">46746.00</div>
<div class="td" style="left:403.60px;top:252.33px;width:22.60px">9477.6</div>
<div class="td" style="left:426.20px;top:252.33px;width:22.60px">0.00</div>
<div class="td" style="left:448.80px;top:252.33px;width:22.60px">0.00</div>
<div class="td" style="left:471.40px;top:252.33px;width:22.50px">0.00</div>
<div class="td" style="left:493.90px;top:252.33px;width:23.30px">2805.6</div>
<div class="td" style="left:517.20px;top:252.33px;width:23.00px">12832.5</div>
<div class="td" style="left:540.20px;top:252.33px;width:22.10px">15638.1</div>
<div class="td" style="left:562.30px;top:252.33px;width:22.40px">4774.8</div>
<div class="td" style="left:584.70px;top:252.33px;width:22.90px">19518</div>
<div class="td" style="left:607.60px;top:252.33px;width:22.90px">24292.8</div>
<div class="td" style="left:630.50px;top:252.33px;width:22.60px">1897.2</div>
<div class="td" style="left:653.10px;top:252.33px;width:22.40px">4917.9</div>
<div class="td" style="left:675.50px;top:252.33px;width:22.90px">6815.1</div>
<div class="td" style="left:698.40px;top:252.33px;width:22.00px">9477.6</div>
<div class="td" style="left:720.40px;top:252.33px;width:22.90px">32.94</div>
<div class="td" style="left:743.30px;top:252.33px;width:23.00px">32.94</div>
<div class="td" style="left:766.30px;top:252.33px;width:22.70px">30</div>
<div class="td" style="left:789.00px;top:252.33px;width:22.50px">1210817-</div>
<div class="hl" style="top:264.70px"></div>
<div class="idx" style="top:265.20px">11</div>
<svg class="cbs" style="top:269.70px" width="4.2" height="4.2" viewBox="0 0 4.2 4.2"><rect x="0.3" y="0.3" width="3.6" height="3.6" fill="#fff" stroke="#a8a8a8" stroke-width="0.55"/></svg>
<div class="td" style="left:237.60px;top:265.20px;width:29.60px">2022-04-01</div>
<div class="td" style="left:267.20px;top:265.20px;width:30.10px">2022-07-04</div>
<div class="td" style="left:297.30px;top:265.20px;width:30.60px">0220350101</div>
<div class="td" style="left:327.90px;top:265.20px;width:30.80px">12号楼2楼观</div>
<div class="td" style="left:358.70px;top:265.20px;width:22.50px">28396.80</div>
<div class="td" style="left:381.20px;top:265.20px;width:22.40px">34513.60</div>
<div class="td" style="left:403.60px;top:265.20px;width:22.60px">6116.8</div>
<div class="td" style="left:426.20px;top:265.20px;width:22.60px">0.00</div>
<div class="td" style="left:448.80px;top:265.20px;width:22.60px">0.00</div>
<div class="td" style="left:471.40px;top:265.20px;width:22.50px">0.00</div>
<div class="td" style="left:493.90px;top:265.20px;width:23.30px">2365.6</div>
<div class="td" style="left:517.20px;top:265.20px;width:23.00px">12051.2</div>
<div class="td" style="left:540.20px;top:265.20px;width:22.10px">14416.8</div>
<div class="td" style="left:562.30px;top:265.20px;width:22.40px">3184</div>
<div class="td" style="left:584.70px;top:265.20px;width:22.90px">15924</div>
<div class="td" style="left:607.60px;top:265.20px;width:22.90px">19108</div>
<div class="td" style="left:630.50px;top:265.20px;width:22.60px">567.2</div>
<div class="td" style="left:653.10px;top:265.20px;width:22.40px">421.6</div>
<div class="td" style="left:675.50px;top:265.20px;width:22.90px">988.8</div>
<div class="td" style="left:698.40px;top:265.20px;width:22.00px">6116.8</div>
<div class="td" style="left:720.40px;top:265.20px;width:22.90px">70.32</div>
<div class="td" style="left:743.30px;top:265.20px;width:23.00px">70.32</div>
<div class="td" style="left:766.30px;top:265.20px;width:22.70px">80</div>
<div class="td" style="left:789.00px;top:265.20px;width:22.50px">1211125</div>
<div class="hl" style="top:277.57px"></div>
<div class="idx" style="top:278.07px">12</div>
<svg class="cbs" style="top:282.57px" width="4.2" height="4.2" viewBox="0 0 4.2 4.2"><rect x="0.3" y="0.3" width="3.6" height="3.6" fill="#fff" stroke="#a8a8a8" stroke-width="0.55"/></svg>
<div class="td" style="left:237.60px;top:278.07px;width:29.60px">2022-04-01</div>
<div class="td" style="left:267.20px;top:278.07px;width:30.10px">2022-07-04</div>
<div class="td" style="left:297.30px;top:278.07px;width:30.60px">0220340101</div>
<div class="td" style="left:327.90px;top:278.07px;width:30.80px">10号楼2楼（</div>
<div class="td" style="left:358.70px;top:278.07px;width:22.50px">13550.40</div>
<div class="td" style="left:381.20px;top:278.07px;width:22.40px">25780.00</div>
<div class="td" style="left:403.60px;top:278.07px;width:22.60px">12229.6</div>
<div class="td" style="left:426.20px;top:278.07px;width:22.60px">0.00</div>
<div class="td" style="left:448.80px;top:278.07px;width:22.60px">0.00</div>
<div class="td" style="left:471.40px;top:278.07px;width:22.50px">0.00</div>
<div class="td" style="left:493.90px;top:278.07px;width:23.30px">3632</div>
<div class="td" style="left:517.20px;top:278.07px;width:23.00px">3954.4</div>
<div class="td" style="left:540.20px;top:278.07px;width:22.10px">7586.4</div>
<div class="td" style="left:562.30px;top:278.07px;width:22.40px">5454.4</div>
<div class="td" style="left:584.70px;top:278.07px;width:22.90px">6488.8</div>
<div class="td" style="left:607.60px;top:278.07px;width:22.90px">11943.2</div>
<div class="td" style="left:630.50px;top:278.07px;width:22.60px">3143.2</div>
<div class="td" style="left:653.10px;top:278.07px;width:22.40px">3107.2</div>
<div class="td" style="left:675.50px;top:278.07px;width:22.90px">6250.4</div>
<div class="td" style="left:698.40px;top:278.07px;width:22.00px">12229.6</div>
<div class="td" style="left:720.40px;top:278.07px;width:22.90px">34.32</div>
<div class="td" style="left:743.30px;top:278.07px;width:23.00px">34.32</div>
<div class="td" style="left:766.30px;top:278.07px;width:22.70px">80</div>
<div class="td" style="left:789.00px;top:278.07px;width:22.50px">1211123</div>
<div class="hl" style="top:290.44px"></div>
<div class="idx" style="top:290.94px">13</div>
<svg class="cbs" style="top:295.44px" width="4.2" height="4.2" viewBox="0 0 4.2 4.2"><rect x="0.3" y="0.3" width="3.6" height="3.6" fill="#fff" stroke="#a8a8a8" stroke-width="0.55"/></svg>
<div class="td" style="left:237.60px;top:290.94px;width:29.60px">2022-04-01</div>
<div class="td" style="left:267.20px;top:290.94px;width:30.10px">2022-07-04</div>
<div class="td" style="left:297.30px;top:290.94px;width:30.60px">0220330000</div>
<div class="td" style="left:327.90px;top:290.94px;width:30.80px">12号楼3楼表</div>
<div class="td" style="left:358.70px;top:290.94px;width:22.50px">0.24</div>
<div class="td" style="left:381.20px;top:290.94px;width:22.40px">0.36</div>
<div class="td" style="left:403.60px;top:290.94px;width:22.60px">0.12</div>
<div class="td" style="left:426.20px;top:290.94px;width:22.60px">0.00</div>
<div class="td" style="left:448.80px;top:290.94px;width:22.60px">0.00</div>
<div class="td" style="left:471.40px;top:290.94px;width:22.50px">0.00</div>
<div class="td" style="left:493.90px;top:290.94px;width:23.30px">0.03</div>
<div class="td" style="left:517.20px;top:290.94px;width:23.00px">0.07</div>
<div class="td" style="left:540.20px;top:290.94px;width:22.10px">0.1</div>
<div class="td" style="left:562.30px;top:290.94px;width:22.40px">0.05</div>
<div class="td" style="left:584.70px;top:290.94px;width:22.90px">0.06</div>
<div class="td" style="left:607.60px;top:290.94px;width:22.90px">0.11</div>
<div class="td" style="left:630.50px;top:290.94px;width:22.60px">0.04</div>
<div class="td" style="left:653.10px;top:290.94px;width:22.40px">0.11</div>
<div class="td" style="left:675.50px;top:290.94px;width:22.90px">0.15</div>
<div class="td" style="left:698.40px;top:290.94px;width:22.00px">0.12</div>
<div class="td" style="left:720.40px;top:290.94px;width:22.90px">0</div>
<div class="td" style="left:743.30px;top:290.94px;width:23.00px">0.00</div>
<div class="td" style="left:766.30px;top:290.94px;width:22.70px">1</div>
<div class="td" style="left:789.00px;top:290.94px;width:22.50px">1210820</div>
<div class="hl" style="top:303.31px"></div>
<div class="idx" style="top:303.81px">14</div>
<svg class="cbs" style="top:308.31px" width="4.2" height="4.2" viewBox="0 0 4.2 4.2"><rect x="0.3" y="0.3" width="3.6" height="3.6" fill="#fff" stroke="#a8a8a8" stroke-width="0.55"/></svg>
<div class="td" style="left:237.60px;top:303.81px;width:29.60px">2022-04-01</div>
<div class="td" style="left:267.20px;top:303.81px;width:30.10px">2022-07-04</div>
<div class="td" style="left:297.30px;top:303.81px;width:30.60px">0220330008</div>
<div class="td" style="left:327.90px;top:303.81px;width:30.80px">12号楼3楼表</div>
<div class="td" style="left:358.70px;top:303.81px;width:22.50px">0.30</div>
<div class="td" style="left:381.20px;top:303.81px;width:22.40px">0.90</div>
<div class="td" style="left:403.60px;top:303.81px;width:22.60px">0.6</div>
<div class="td" style="left:426.20px;top:303.81px;width:22.60px">0.00</div>
<div class="td" style="left:448.80px;top:303.81px;width:22.60px">0.00</div>
<div class="td" style="left:471.40px;top:303.81px;width:22.50px">0.00</div>
<div class="td" style="left:493.90px;top:303.81px;width:23.30px">0.3</div>
<div class="td" style="left:517.20px;top:303.81px;width:23.00px">0.3</div>
<div class="td" style="left:540.20px;top:303.81px;width:22.10px">0.6</div>
<div class="td" style="left:562.30px;top:303.81px;width:22.40px">0.00</div>
<div class="td" style="left:584.70px;top:303.81px;width:22.90px">0.00</div>
<div class="td" style="left:607.60px;top:303.81px;width:22.90px">0.00</div>
<div class="td" style="left:630.50px;top:303.81px;width:22.60px">0.3</div>
<div class="td" style="left:653.10px;top:303.81px;width:22.40px">0.00</div>
<div class="td" style="left:675.50px;top:303.81px;width:22.90px">0.3</div>
<div class="td" style="left:698.40px;top:303.81px;width:22.00px">0.6</div>
<div class="td" style="left:720.40px;top:303.81px;width:22.90px">0</div>
<div class="td" style="left:743.30px;top:303.81px;width:23.00px">0.00</div>
<div class="td" style="left:766.30px;top:303.81px;width:22.70px">1</div>
<div class="td" style="left:789.00px;top:303.81px;width:22.50px">1210817-</div>
<div class="hl" style="top:316.18px"></div>
<div class="idx" style="top:316.68px">15</div>
<svg class="cbs" style="top:321.18px" width="4.2" height="4.2" viewBox="0 0 4.2 4.2"><rect x="0.3" y="0.3" width="3.6" height="3.6" fill="#fff" stroke="#a8a8a8" stroke-width="0.55"/></svg>
<div class="td" style="left:237.60px;top:316.68px;width:29.60px">2022-04-01</div>
<div class="td" style="left:267.20px;top:316.68px;width:30.10px">2022-07-04</div>
<div class="td" style="left:297.30px;top:316.68px;width:30.60px">0220330004</div>
<div class="td" style="left:327.90px;top:316.68px;width:30.80px">12号楼3楼表</div>
<div class="td" style="left:358.70px;top:316.68px;width:22.50px">0.30</div>
<div class="td" style="left:381.20px;top:316.68px;width:22.40px">0.60</div>
<div class="td" style="left:403.60px;top:316.68px;width:22.60px">0.3</div>
<div class="td" style="left:426.20px;top:316.68px;width:22.60px">0.00</div>
<div class="td" style="left:448.80px;top:316.68px;width:22.60px">0.00</div>
<div class="td" style="left:471.40px;top:316.68px;width:22.50px">0.00</div>
<div class="td" style="left:493.90px;top:316.68px;width:23.30px">0.00</div>
<div class="td" style="left:517.20px;top:316.68px;width:23.00px">0.3</div>
<div class="td" style="left:540.20px;top:316.68px;width:22.10px">0.3</div>
<div class="td" style="left:562.30px;top:316.68px;width:22.40px">0.3</div>
<div class="td" style="left:584.70px;top:316.68px;width:22.90px">0.00</div>
<div class="td" style="left:607.60px;top:316.68px;width:22.90px">0.3</div>
<div class="td" style="left:630.50px;top:316.68px;width:22.60px">0.00</div>
<div class="td" style="left:653.10px;top:316.68px;width:22.40px">0.00</div>
<div class="td" style="left:675.50px;top:316.68px;width:22.90px">0.00</div>
<div class="td" style="left:698.40px;top:316.68px;width:22.00px">0.3</div>
<div class="td" style="left:720.40px;top:316.68px;width:22.90px">0</div>
<div class="td" style="left:743.30px;top:316.68px;width:23.00px">0.00</div>
<div class="td" style="left:766.30px;top:316.68px;width:22.70px">30</div>
<div class="td" style="left:789.00px;top:316.68px;width:22.50px">1210817-</div>
<div class="hl" style="top:329.05px"></div>
<div class="idx" style="top:329.55px">16</div>
<svg class="cbs" style="top:334.05px" width="4.2" height="4.2" viewBox="0 0 4.2 4.2"><rect x="0.3" y="0.3" width="3.6" height="3.6" fill="#fff" stroke="#a8a8a8" stroke-width="0.55"/></svg>
<div class="td" style="left:237.60px;top:329.55px;width:29.60px">2022-04-01</div>
<div class="td" style="left:267.20px;top:329.55px;width:30.10px">2022-07-04</div>
<div class="td" style="left:297.30px;top:329.55px;width:30.60px">0220330009</div>
<div class="td" style="left:327.90px;top:329.55px;width:30.80px">12号楼2楼表</div>
<div class="td" style="left:358.70px;top:329.55px;width:22.50px">3407.98</div>
<div class="td" style="left:381.20px;top:329.55px;width:22.40px">3729.17</div>
<div class="td" style="left:403.60px;top:329.55px;width:22.60px">321.19</div>
<div class="td" style="left:426.20px;top:329.55px;width:22.60px">0.00</div>
<div class="td" style="left:448.80px;top:329.55px;width:22.60px">0.00</div>
<div class="td" style="left:471.40px;top:329.55px;width:22.50px">0.00</div>
<div class="td" style="left:493.90px;top:329.55px;width:23.30px">84.43</div>
<div class="td" style="left:517.20px;top:329.55px;width:23.00px">1648.9</div>
<div class="td" style="left:540.20px;top:329.55px;width:22.10px">1733.33</div>
<div class="td" style="left:562.30px;top:329.55px;width:22.40px">164.19</div>
<div class="td" style="left:584.70px;top:329.55px;width:22.90px">1567.05</div>
<div class="td" style="left:607.60px;top:329.55px;width:22.90px">1731.24</div>
<div class="td" style="left:630.50px;top:329.55px;width:22.60px">72.57</div>
<div class="td" style="left:653.10px;top:329.55px;width:22.40px">192.03</div>
<div class="td" style="left:675.50px;top:329.55px;width:22.90px">264.6</div>
<div class="td" style="left:698.40px;top:329.55px;width:22.00px">321.19</div>
<div class="td" style="left:720.40px;top:329.55px;width:22.90px">2.004</div>
<div class="td" style="left:743.30px;top:329.55px;width:23.00px">2</div>
<div class="td" style="left:766.30px;top:329.55px;width:22.70px">1</div>
<div class="td" style="left:789.00px;top:329.55px;width:22.50px">1210817-</div>
<div class="hl" style="top:341.92px"></div>
<div class="idx" style="top:342.42px">17</div>
<svg class="cbs" style="top:346.92px" width="4.2" height="4.2" viewBox="0 0 4.2 4.2"><rect x="0.3" y="0.3" width="3.6" height="3.6" fill="#fff" stroke="#a8a8a8" stroke-width="0.55"/></svg>
<div class="td" style="left:237.60px;top:342.42px;width:29.60px">2022-04-01</div>
<div class="td" style="left:267.20px;top:342.42px;width:30.10px">2022-07-04</div>
<div class="td" style="left:297.30px;top:342.42px;width:30.60px">0220330008</div>
<div class="td" style="left:327.90px;top:342.42px;width:30.80px">12号楼2楼表</div>
<div class="td" style="left:358.70px;top:342.42px;width:22.50px">0.18</div>
<div class="td" style="left:381.20px;top:342.42px;width:22.40px">0.29</div>
<div class="td" style="left:403.60px;top:342.42px;width:22.60px">0.11</div>
<div class="td" style="left:426.20px;top:342.42px;width:22.60px">0.00</div>
<div class="td" style="left:448.80px;top:342.42px;width:22.60px">0.00</div>
<div class="td" style="left:471.40px;top:342.42px;width:22.50px">0.00</div>
<div class="td" style="left:493.90px;top:342.42px;width:23.30px">0.03</div>
<div class="td" style="left:517.20px;top:342.42px;width:23.00px">0.06</div>
<div class="td" style="left:540.20px;top:342.42px;width:22.10px">0.09</div>
<div class="td" style="left:562.30px;top:342.42px;width:22.40px">0.02</div>
<div class="td" style="left:584.70px;top:342.42px;width:22.90px">0.05</div>
<div class="td" style="left:607.60px;top:342.42px;width:22.90px">0.07</div>
<div class="td" style="left:630.50px;top:342.42px;width:22.60px">0.06</div>
<div class="td" style="left:653.10px;top:342.42px;width:22.40px">0.07</div>
<div class="td" style="left:675.50px;top:342.42px;width:22.90px">0.13</div>
<div class="td" style="left:698.40px;top:342.42px;width:22.00px">0.11</div>
<div class="td" style="left:720.40px;top:342.42px;width:22.90px">0</div>
<div class="td" style="left:743.30px;top:342.42px;width:23.00px">0.00</div>
<div class="td" style="left:766.30px;top:342.42px;width:22.70px">1</div>
<div class="td" style="left:789.00px;top:342.42px;width:22.50px">1210817-</div>
<div class="hl" style="top:354.79px"></div>
<div class="idx" style="top:355.29px">18</div>
<svg class="cbs" style="top:359.79px" width="4.2" height="4.2" viewBox="0 0 4.2 4.2"><rect x="0.3" y="0.3" width="3.6" height="3.6" fill="#fff" stroke="#a8a8a8" stroke-width="0.55"/></svg>
<div class="td" style="left:237.60px;top:355.29px;width:29.60px">2022-04-01</div>
<div class="td" style="left:267.20px;top:355.29px;width:30.10px">2022-07-04</div>
<div class="td" style="left:297.30px;top:355.29px;width:30.60px">0220330007</div>
<div class="td" style="left:327.90px;top:355.29px;width:30.80px">12号楼2楼表</div>
<div class="td" style="left:358.70px;top:355.29px;width:22.50px">55720.20</div>
<div class="td" style="left:381.20px;top:355.29px;width:22.40px">65738.40</div>
<div class="td" style="left:403.60px;top:355.29px;width:22.60px">10018.2</div>
<div class="td" style="left:426.20px;top:355.29px;width:22.60px">0.00</div>
<div class="td" style="left:448.80px;top:355.29px;width:22.60px">0.00</div>
<div class="td" style="left:471.40px;top:355.29px;width:22.50px">0.00</div>
<div class="td" style="left:493.90px;top:355.29px;width:23.30px">2574</div>
<div class="td" style="left:517.20px;top:355.29px;width:23.00px">22418.4</div>
<div class="td" style="left:540.20px;top:355.29px;width:22.10px">24992.4</div>
<div class="td" style="left:562.30px;top:355.29px;width:22.40px">4216.8</div>
<div class="td" style="left:584.70px;top:355.29px;width:22.90px">26537.4</div>
<div class="td" style="left:607.60px;top:355.29px;width:22.90px">30754.2</div>
<div class="td" style="left:630.50px;top:355.29px;width:22.60px">3227.4</div>
<div class="td" style="left:653.10px;top:355.29px;width:22.40px">6764.4</div>
<div class="td" style="left:675.50px;top:355.29px;width:22.90px">9991.8</div>
<div class="td" style="left:698.40px;top:355.29px;width:22.00px">10018.2</div>
<div class="td" style="left:720.40px;top:355.29px;width:22.90px">24.9</div>
<div class="td" style="left:743.30px;top:355.29px;width:23.00px">24.9</div>
<div class="td" style="left:766.30px;top:355.29px;width:22.70px">60</div>
<div class="td" style="left:789.00px;top:355.29px;width:22.50px">1210817-</div>
<div class="hl" style="top:367.66px"></div>
<div class="idx" style="top:368.16px">19</div>
<svg class="cbs" style="top:372.66px" width="4.2" height="4.2" viewBox="0 0 4.2 4.2"><rect x="0.3" y="0.3" width="3.6" height="3.6" fill="#fff" stroke="#a8a8a8" stroke-width="0.55"/></svg>
<div class="td" style="left:237.60px;top:368.16px;width:29.60px">2022-04-01</div>
<div class="td" style="left:267.20px;top:368.16px;width:30.10px">2022-07-04</div>
<div class="td" style="left:297.30px;top:368.16px;width:30.60px">0220330006</div>
<div class="td" style="left:327.90px;top:368.16px;width:30.80px">12号楼（溢</div>
<div class="td" style="left:358.70px;top:368.16px;width:22.50px">53522.01</div>
<div class="td" style="left:381.20px;top:368.16px;width:22.40px">69185.72</div>
<div class="td" style="left:403.60px;top:368.16px;width:22.60px">15663.71</div>
<div class="td" style="left:426.20px;top:368.16px;width:22.60px">0.00</div>
<div class="td" style="left:448.80px;top:368.16px;width:22.60px">0.00</div>
<div class="td" style="left:471.40px;top:368.16px;width:22.50px">0.00</div>
<div class="td" style="left:493.90px;top:368.16px;width:23.30px">4390.45</div>
<div class="td" style="left:517.20px;top:368.16px;width:23.00px">16075.07</div>
<div class="td" style="left:540.20px;top:368.16px;width:22.10px">20465.52</div>
<div class="td" style="left:562.30px;top:368.16px;width:22.40px">6905.36</div>
<div class="td" style="left:584.70px;top:368.16px;width:22.90px">24184.05</div>
<div class="td" style="left:607.60px;top:368.16px;width:22.90px">31089.41</div>
<div class="td" style="left:630.50px;top:368.16px;width:22.60px">4367.9</div>
<div class="td" style="left:653.10px;top:368.16px;width:22.40px">13262.89</div>
<div class="td" style="left:675.50px;top:368.16px;width:22.90px">17630.79</div>
<div class="td" style="left:698.40px;top:368.16px;width:22.00px">15663.71</div>
<div class="td" style="left:720.40px;top:368.16px;width:22.90px">30.222</div>
<div class="td" style="left:743.30px;top:368.16px;width:23.00px">30.22</div>
<div class="td" style="left:766.30px;top:368.16px;width:22.70px">1</div>
<div class="td" style="left:789.00px;top:368.16px;width:22.50px">1210820</div>
<div class="hl" style="top:380.53px"></div>
<div class="idx" style="top:381.03px">20</div>
<svg class="cbs" style="top:385.53px" width="4.2" height="4.2" viewBox="0 0 4.2 4.2"><rect x="0.3" y="0.3" width="3.6" height="3.6" fill="#fff" stroke="#a8a8a8" stroke-width="0.55"/></svg>
<div class="td" style="left:237.60px;top:381.03px;width:29.60px">2022-04-01</div>
<div class="td" style="left:267.20px;top:381.03px;width:30.10px">2022-07-04</div>
<div class="td" style="left:297.30px;top:381.03px;width:30.60px">0220330005</div>
<div class="td" style="left:327.90px;top:381.03px;width:30.80px">12号楼1楼表</div>
<div class="td" style="left:358.70px;top:381.03px;width:22.50px">185.36</div>
<div class="td" style="left:381.20px;top:381.03px;width:22.40px">350.21</div>
<div class="td" style="left:403.60px;top:381.03px;width:22.60px">164.85</div>
<div class="td" style="left:426.20px;top:381.03px;width:22.60px">0.00</div>
<div class="td" style="left:448.80px;top:381.03px;width:22.60px">0.00</div>
<div class="td" style="left:471.40px;top:381.03px;width:22.50px">0.00</div>
<div class="td" style="left:493.90px;top:381.03px;width:23.30px">48.3</div>
<div class="td" style="left:517.20px;top:381.03px;width:23.00px">74.39</div>
<div class="td" style="left:540.20px;top:381.03px;width:22.10px">122.69</div>
<div class="td" style="left:562.30px;top:381.03px;width:22.40px">77.79</div>
<div class="td" style="left:584.70px;top:381.03px;width:22.90px">76.65</div>
<div class="td" style="left:607.60px;top:381.03px;width:22.90px">154.44</div>
<div class="td" style="left:630.50px;top:381.03px;width:22.60px">38.76</div>
<div class="td" style="left:653.10px;top:381.03px;width:22.40px">34.32</div>
<div class="td" style="left:675.50px;top:381.03px;width:22.90px">73.08</div>
<div class="td" style="left:698.40px;top:381.03px;width:22.00px">164.85</div>
<div class="td" style="left:720.40px;top:381.03px;width:22.90px">7.997</div>
<div class="td" style="left:743.30px;top:381.03px;width:23.00px">8</div>
<div class="td" style="left:766.30px;top:381.03px;width:22.70px">1</div>
<div class="td" style="left:789.00px;top:381.03px;width:22.50px">1210817-</div>

<div id="footer"></div>
<div id="footl"></div>
<div class="lbl" style="left:787.4px;top:392.4px;color:#777;font-size:5.25px;letter-spacing:0">© 2012 - 2022</div>
<div id="rs3"></div>
<div id="rs4"></div><div id="rs1"></div>
<div id="rs2"></div>
<div id="topline"></div>
</body></html>
